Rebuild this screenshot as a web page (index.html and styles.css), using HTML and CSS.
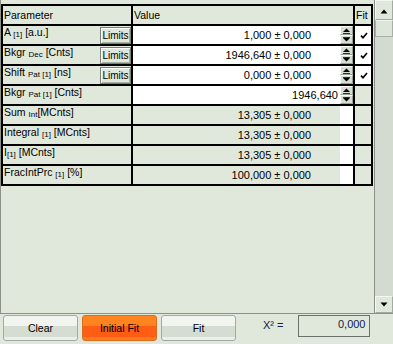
FILE: index.html
```html
<!DOCTYPE html>
<html lang="en">
<head>
  <meta charset="UTF-8">
  <title>Fit parameters</title>
  <link rel="stylesheet" href="styles.css">
</head>
<body>

<div class="panel">
  <div class="grid-area">
    <table class="params">
      <tr>
        <th class="c-par">Parameter</th>
        <th class="c-val">Value</th>
        <th class="c-fit">Fit</th>
      </tr>

      <!-- editable rows -->
      <tr>
        <td><div class="pcell"><span class="lbl">A <sub>[1]</sub> [a.u.]</span><button class="limits">Limits</button></div></td>
        <td class="value"><div class="vbox"><span class="num">1,000 ± 0,000</span>
          <svg class="spin" width="13" height="18" viewBox="0 0 13 18"><rect width="13" height="18" fill="#d6ded3"/><path d="M0.5 8.5V0.5H12.5M0.5 17.5V9.5H12.5" stroke="#fff" fill="none"/><path d="M12.5 0.5V8.5H0.5M12.5 9.5V17.5H0.5" stroke="#9aa297" fill="none"/><path d="M3 6H10L6.5 2.5Z" fill="#000"/><rect x="3" y="7" width="7" height="1" fill="#333"/><rect x="3" y="11" width="7" height="1" fill="#333"/><path d="M3 12H10L6.5 15.5Z" fill="#000"/></svg>
        </div></td>
        <td class="fit on"><svg class="tick" width="8" height="7" viewBox="0 0 8 7"><path d="M1 3.6 3 5.8 7 1" stroke="#000" stroke-width="1.6" fill="none"/></svg></td>
      </tr>
      <tr>
        <td><div class="pcell"><span class="lbl">Bkgr <sub>Dec</sub> [Cnts]</span><button class="limits">Limits</button></div></td>
        <td class="value"><div class="vbox"><span class="num">1946,640 ± 0,000</span>
          <svg class="spin" width="13" height="18" viewBox="0 0 13 18"><rect width="13" height="18" fill="#d6ded3"/><path d="M0.5 8.5V0.5H12.5M0.5 17.5V9.5H12.5" stroke="#fff" fill="none"/><path d="M12.5 0.5V8.5H0.5M12.5 9.5V17.5H0.5" stroke="#9aa297" fill="none"/><path d="M3 6H10L6.5 2.5Z" fill="#000"/><rect x="3" y="7" width="7" height="1" fill="#333"/><rect x="3" y="11" width="7" height="1" fill="#333"/><path d="M3 12H10L6.5 15.5Z" fill="#000"/></svg>
        </div></td>
        <td class="fit on"><svg class="tick" width="8" height="7" viewBox="0 0 8 7"><path d="M1 3.6 3 5.8 7 1" stroke="#000" stroke-width="1.6" fill="none"/></svg></td>
      </tr>
      <tr>
        <td><div class="pcell"><span class="lbl">Shift <sub>Pat [1]</sub> [ns]</span><button class="limits">Limits</button></div></td>
        <td class="value"><div class="vbox"><span class="num">0,000 ± 0,000</span>
          <svg class="spin" width="13" height="18" viewBox="0 0 13 18"><rect width="13" height="18" fill="#d6ded3"/><path d="M0.5 8.5V0.5H12.5M0.5 17.5V9.5H12.5" stroke="#fff" fill="none"/><path d="M12.5 0.5V8.5H0.5M12.5 9.5V17.5H0.5" stroke="#9aa297" fill="none"/><path d="M3 6H10L6.5 2.5Z" fill="#000"/><rect x="3" y="7" width="7" height="1" fill="#333"/><rect x="3" y="11" width="7" height="1" fill="#333"/><path d="M3 12H10L6.5 15.5Z" fill="#000"/></svg>
        </div></td>
        <td class="fit on"><svg class="tick" width="8" height="7" viewBox="0 0 8 7"><path d="M1 3.6 3 5.8 7 1" stroke="#000" stroke-width="1.6" fill="none"/></svg></td>
      </tr>
      <tr>
        <td><div class="pcell"><span class="lbl">Bkgr <sub>Pat [1]</sub> [Cnts]</span></div></td>
        <td class="value"><div class="vbox"><span class="num tight">1946,640</span>
          <svg class="spin" width="13" height="18" viewBox="0 0 13 18"><rect width="13" height="18" fill="#d6ded3"/><path d="M0.5 8.5V0.5H12.5M0.5 17.5V9.5H12.5" stroke="#fff" fill="none"/><path d="M12.5 0.5V8.5H0.5M12.5 9.5V17.5H0.5" stroke="#9aa297" fill="none"/><path d="M3 6H10L6.5 2.5Z" fill="#000"/><rect x="3" y="7" width="7" height="1" fill="#333"/><rect x="3" y="11" width="7" height="1" fill="#333"/><path d="M3 12H10L6.5 15.5Z" fill="#000"/></svg>
        </div></td>
        <td class="fit"></td>
      </tr>

      <!-- computed rows -->
      <tr>
        <td><div class="pcell"><span class="lbl">Sum <sub>Int</sub>[MCnts]</span></div></td>
        <td class="value ro"><div class="vbox"><span class="num">13,305 ± 0,000</span><span class="strip"></span></div></td>
        <td class="fit"></td>
      </tr>
      <tr>
        <td><div class="pcell"><span class="lbl">Integral <sub>[1]</sub> [MCnts]</span></div></td>
        <td class="value ro"><div class="vbox"><span class="num">13,305 ± 0,000</span><span class="strip"></span></div></td>
        <td class="fit"></td>
      </tr>
      <tr>
        <td><div class="pcell"><span class="lbl">I<sub>[1]</sub> [MCnts]</span></div></td>
        <td class="value ro"><div class="vbox"><span class="num">13,305 ± 0,000</span><span class="strip"></span></div></td>
        <td class="fit"></td>
      </tr>
      <tr>
        <td><div class="pcell"><span class="lbl">FracIntPrc <sub>[1]</sub> [%]</span></div></td>
        <td class="value ro"><div class="vbox"><span class="num">100,000 ± 0,000</span><span class="strip"></span></div></td>
        <td class="fit"></td>
      </tr>
    </table>
  </div>

  <div class="scrollbar">
    <div class="sb-btn up"><svg width="8" height="5" viewBox="0 0 8 5"><path d="M0.5 4.5H7.5L4 0.5Z" fill="#000"/></svg></div>
    <div class="sb-thumb"></div>
    <div class="sb-track"></div>
    <div class="sb-btn down"><svg width="8" height="5" viewBox="0 0 8 5"><path d="M0.5 0.5H7.5L4 4.5Z" fill="#000"/></svg></div>
  </div>
</div>

<div class="bottom-bar">
  <button class="act">Clear</button>
  <button class="act hot">Initial Fit</button>
  <button class="act">Fit</button>
  <span class="chi">X² =</span>
  <div class="chi-box">0,000</div>
</div>

</body>
</html>
```

FILE: styles.css
```css
* { box-sizing: border-box; }
body {
  margin: 0;
  background: #e0e8dc;
  font-family: 'Liberation Sans', Arial, sans-serif;
  font-size: 10.5px;
  color: #000;
  overflow: hidden;
}

.panel {
  display: flex;
  height: 314px;
  border-left: 1px solid #8c9089;
  border-bottom: 1px solid #8c9089;
}

.grid-area {
  width: 372px;
  padding-top: 4px;
}

.params {
  border-spacing: 2px;
  background: #000;
  table-layout: fixed;
  width: 372px;
}

.params th,
.params td {
  padding: 0;
  height: 18px;
  background: #e0e8dc;
  overflow: hidden;
  vertical-align: top;
}

.params th {
  font-weight: normal;
  text-align: left;
  padding-left: 1px;
  line-height: 18px;
}

.c-par { width: 128px; }
.c-val { width: 220px; }
.c-fit { width: 16px; }

.pcell {
  display: flex;
  justify-content: space-between;
  height: 18px;
}

.lbl {
  line-height: 12px;
  padding-left: 1px;
  white-space: nowrap;
}

.lbl sub {
  font-size: 8px;
  vertical-align: -1px;
  line-height: 0;
}

.limits {
  align-self: flex-end;
  width: 31px;
  height: 17px;
  margin: 0;
  padding: 0;
  font-family: inherit;
  font-size: 10px;
  color: #000;
  background: #e0e8dc;
  border: 1px solid #7c8079;
  box-shadow: inset 1px 1px 0 #fff, inset -1px -1px 0 #a8b0a4;
}

.params td.value { background: #fff; }
.params td.value.ro { background: #e0e8dc; }

.vbox {
  display: flex;
  height: 18px;
}

.num {
  flex: 1;
  text-align: right;
  padding-right: 29px;
  font-size: 11px;
  line-height: 18px;
  white-space: nowrap;
}

.num.tight { padding-right: 2px; }

.spin { flex: none; display: block; }

.strip {
  width: 13px;
  background: #fff;
}

.params td.fit.on { background: #fff; }

.tick {
  display: block;
  margin: 6px 0 0 5px;
}

.scrollbar {
  width: 19px;
  margin-left: 1px;
  border-left: 1px solid #8c9089;
  background: #d3dbd0;
  display: flex;
  flex-direction: column;
}

.sb-btn {
  display: flex;
  align-items: center;
  justify-content: center;
  background: #e0e8dc;
  border: 1px solid #a3aba0;
  border-top-color: #f4f7f2;
  border-left-color: #f4f7f2;
}

.sb-btn.up { height: 20px; padding-top: 2px; }
.sb-btn.down { height: 17px; }

.sb-thumb {
  height: 17px;
  background: #dde5da;
  border: 1px solid #a8b0a5;
  border-top-color: #f0f4ee;
}

.sb-track { flex: 1; }

.bottom-bar {
  display: flex;
  align-items: flex-start;
  gap: 4px;
  padding: 1px 0 0 3px;
}

.act {
  width: 75px;
  height: 26px;
  margin: 0;
  padding: 0;
  font-family: inherit;
  font-size: 10.5px;
  line-height: 22px;
  color: #000;
  border: 1px solid #a4a8a2;
  border-radius: 3px;
  background: linear-gradient(#f1f4ef 0 42%, #d5ddd2 42% 88%, #eaefe8 88%);
}

.act.hot {
  border-color: #d96d1c;
  background: linear-gradient(#ff8420 0 42%, #ff5c14 42% 88%, #ff7a1c 88%);
}

.chi {
  margin: 1px 0 0 23px;
  font-size: 11px;
  line-height: 18px;
  color: #10204a;
}

.chi-box {
  width: 72px;
  height: 22px;
  margin-left: 11px;
  border: 1px solid #6c706a;
  text-align: right;
  padding-right: 4px;
  font-size: 11px;
  line-height: 17px;
  color: #10204a;
}
```
